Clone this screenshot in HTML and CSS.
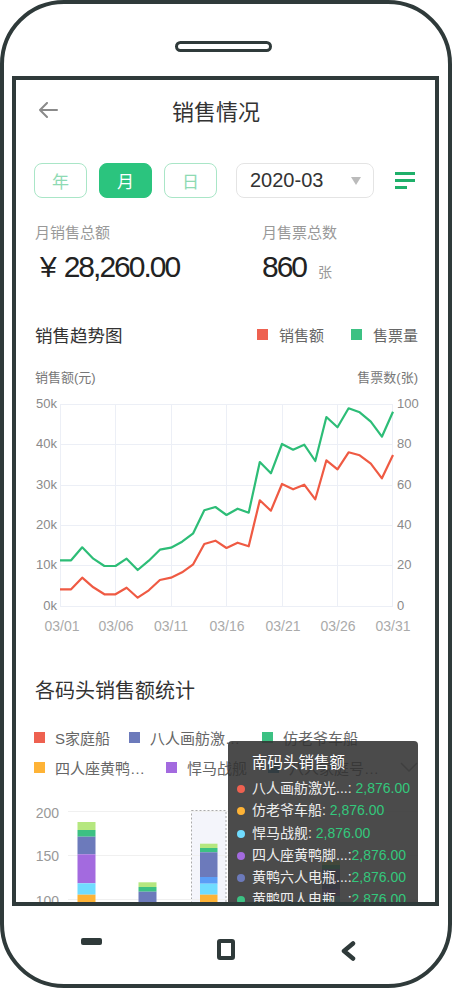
FILE: index.html
```html
<!DOCTYPE html>
<html lang="zh-CN">
<head>
  <meta charset="UTF-8">
  <meta name="viewport" content="width=device-width, initial-scale=1.0">
  <title>销售情况</title>
  <link rel="stylesheet" href="styles.css">
</head>
<body>
<div class="phone">
  <div class="speaker"></div>
  <div class="screen">
    <div class="header">
      <svg class="back" width="20" height="16" viewBox="0 0 20 16">
        <path d="M19 8H2M9 1L2 8l7 7" fill="none" stroke="#8a8a8a" stroke-width="2" stroke-linecap="round" stroke-linejoin="round"/>
      </svg>
      <h1 class="title">销售情况</h1>
    </div>

    <div class="controls">
      <button class="tab">年</button>
      <button class="tab active">月</button>
      <button class="tab">日</button>
      <div class="select"><span>2020-03</span><i class="caret"></i></div>
      <div class="menu"><span></span><span></span><span class="short"></span></div>
    </div>

    <div class="stats">
      <div class="stat first">
        <div class="stat-label">月销售总额</div>
        <div class="stat-value"><span class="yen">¥</span>28,260.00</div>
      </div>
      <div class="stat">
        <div class="stat-label">月售票总数</div>
        <div class="stat-value">860<small>张</small></div>
      </div>
    </div>

    <div class="section-head">
      <h2>销售趋势图</h2>
      <div class="legend">
        <span class="sq red"></span>销售额
        <span class="sq green gap"></span>售票量
      </div>
    </div>
    <div class="axis-titles"><span>销售额(元)</span><span>售票数(张)</span></div>

    <svg class="trend" width="419" height="253" viewBox="16 387 419 253">
      <g class="grid">
        <line x1="60" y1="404.5" x2="393" y2="404.5"/>
        <line x1="60" y1="444.5" x2="393" y2="444.5"/>
        <line x1="60" y1="485.5" x2="393" y2="485.5"/>
        <line x1="60" y1="525.5" x2="393" y2="525.5"/>
        <line x1="60" y1="565.5" x2="393" y2="565.5"/>
        <line x1="60" y1="606.5" x2="393" y2="606.5"/>
        <line x1="60.5" y1="404" x2="60.5" y2="607"/>
        <line x1="115.5" y1="404" x2="115.5" y2="607"/>
        <line x1="171.5" y1="404" x2="171.5" y2="607"/>
        <line x1="226.5" y1="404" x2="226.5" y2="607"/>
        <line x1="282.5" y1="404" x2="282.5" y2="607"/>
        <line x1="337.5" y1="404" x2="337.5" y2="607"/>
        <line x1="392.5" y1="404" x2="392.5" y2="607"/>
      </g>
      <g class="ylabels left">
        <text x="57" y="405">50k</text>
        <text x="57" y="445">40k</text>
        <text x="57" y="486">30k</text>
        <text x="57" y="526">20k</text>
        <text x="57" y="566">10k</text>
        <text x="57" y="607">0k</text>
      </g>
      <g class="ylabels right">
        <text x="397" y="405">100</text>
        <text x="397" y="445">80</text>
        <text x="397" y="486">60</text>
        <text x="397" y="526">40</text>
        <text x="397" y="566">20</text>
        <text x="397" y="607">0</text>
      </g>
      <g class="xlabels">
        <text x="62" y="627">03/01</text>
        <text x="116" y="627">03/06</text>
        <text x="171" y="627">03/11</text>
        <text x="227" y="627">03/16</text>
        <text x="283" y="627">03/21</text>
        <text x="338" y="627">03/26</text>
        <text x="393" y="627">03/31</text>
      </g>
      <polyline class="line-green" points="60,560.3 71.1,560.3 82.2,547.3 93.3,558.7 104.4,566 115.5,566 126.6,558.7 137.7,570 148.8,560.7 159.9,549.7 171,547.7 182.1,541.7 193.2,533.3 204.3,510.3 215.4,507 226.5,515 237.6,508.7 248.7,512.7 259.8,462 270.9,473.3 282,444 293.1,449.7 304.2,444.7 315.3,461 326.4,417 337.5,427.3 348.6,408.3 359.7,412.3 370.8,421.7 381.9,436.7 393,411.7"/>
      <polyline class="line-red" points="60,589.3 71.1,589.3 82.2,577.7 93.3,587.3 104.4,594.3 115.5,594.3 126.6,587.7 137.7,597.7 148.8,590.3 159.9,580 171,577.7 182.1,572.3 193.2,564.3 204.3,544 215.4,540.7 226.5,548 237.6,542.7 248.7,546.3 259.8,500.3 270.9,510.7 282,484 293.1,489.3 304.2,484.7 315.3,499.3 326.4,460.3 337.5,469.3 348.6,452.3 359.7,455.3 370.8,463.7 381.9,478.3 393,455"/>
    </svg>

    <h2 class="section-title">各码头销售额统计</h2>
    <div class="pier-legend row1">
      <div class="item"><span class="sq red"></span>S家庭船</div>
      <div class="item"><span class="sq slate"></span>八人画舫激…</div>
      <div class="item"><span class="sq green"></span>仿老爷车船</div>
    </div>
    <div class="pier-legend row2">
      <div class="item"><span class="sq orange"></span>四人座黄鸭…</div>
      <div class="item"><span class="sq purple"></span>悍马战舰</div>
      <div class="item"><span class="sq teal"></span>八人家庭号…</div>
      <svg class="pager" width="18" height="10" viewBox="0 0 18 10">
        <path d="M1 1l8 8 8-8" fill="none" stroke="#999" stroke-width="1.5"/>
      </svg>
    </div>

    <svg class="bars" width="419" height="123" viewBox="16 779 419 123">
      <rect class="hover" x="191.5" y="809.5" width="34.5" height="100"/>
      <g class="grid">
        <line x1="68" y1="810.5" x2="418" y2="810.5"/>
        <line x1="68" y1="854.5" x2="418" y2="854.5"/>
        <line x1="68" y1="898.5" x2="418" y2="898.5"/>
      </g>
      <g class="ylabels left">
        <text x="59" y="813">200</text>
        <text x="59" y="856">150</text>
        <text x="59" y="901">100</text>
      </g>
      <g>
        <rect class="c-lgreen" x="77.5" y="821" width="18" height="8"/>
        <rect class="c-green" x="77.5" y="829" width="18" height="6.7"/>
        <rect class="c-slate" x="77.5" y="835.7" width="18" height="17.6"/>
        <rect class="c-purple" x="77.5" y="853.3" width="18" height="29"/>
        <rect class="c-cyan" x="77.5" y="882.3" width="18" height="11.4"/>
        <rect class="c-orange" x="77.5" y="893.7" width="18" height="12"/>

        <rect class="c-lgreen" x="138.5" y="881.3" width="18" height="4.7"/>
        <rect class="c-green" x="138.5" y="886" width="18" height="4.7"/>
        <rect class="c-slate" x="138.5" y="890.7" width="18" height="11"/>
        <rect class="c-purple" x="138.5" y="901.7" width="18" height="4"/>

        <rect class="c-lgreen" x="200" y="842.7" width="17.5" height="4.3"/>
        <rect class="c-green" x="200" y="847" width="17.5" height="4.3"/>
        <rect class="c-slate" x="200" y="851.3" width="17.5" height="24.7"/>
        <rect class="c-blue" x="200" y="876" width="17.5" height="6.7"/>
        <rect class="c-cyan" x="200" y="882.7" width="17.5" height="11"/>
        <rect class="c-orange" x="200" y="893.7" width="17.5" height="12"/>

        <rect class="c-lgreen" x="322" y="860" width="18" height="4"/>
        <rect class="c-green" x="322" y="864" width="18" height="4"/>
        <rect class="c-slate" x="322" y="868" width="18" height="20"/>
        <rect class="c-purple" x="322" y="888" width="18" height="7"/>
        <rect class="c-cyan" x="322" y="895" width="18" height="10"/>
      </g>
    </svg>

    <div class="tooltip">
      <div class="tip-title">南码头销售额</div>
      <div class="tip-row"><i class="tip-dot red"></i>八人画舫激光...: <b>2,876.00</b></div>
      <div class="tip-row"><i class="tip-dot orange"></i>仿老爷车船: <b>2,876.00</b></div>
      <div class="tip-row"><i class="tip-dot cyan"></i>悍马战舰: <b>2,876.00</b></div>
      <div class="tip-row"><i class="tip-dot purple"></i>四人座黄鸭脚...:<b>2,876.00</b></div>
      <div class="tip-row"><i class="tip-dot slate"></i>黄鸭六人电瓶...:<b>2,876.00</b></div>
      <div class="tip-row"><i class="tip-dot green"></i>黄鸭四人电瓶...:<b>2,876.00</b></div>
    </div>
  </div>

  <div class="nav">
    <span class="nav-minus"></span>
    <span class="nav-home"></span>
    <svg class="nav-back" width="16" height="20" viewBox="0 0 16 20">
      <path d="M13 2.5L4 10l9 7.5" fill="none" stroke="#2f3a3a" stroke-width="4.5" stroke-linecap="round" stroke-linejoin="round"/>
    </svg>
  </div>
</div>
</body>
</html>
```

FILE: styles.css
```css
* {
  box-sizing: border-box;
}
body {
  margin: 0;
  background-color: #fff;
  font-family: "Liberation Sans", "Noto Sans CJK SC", sans-serif;
  color: #333;
}
.phone {
  width: 452px;
  height: 988px;
  border: 4px solid #2f3a3a;
  border-radius: 64px;
  overflow: hidden;
}
.speaker {
  width: 97px;
  height: 11px;
  margin: 37px 0 0 171px;
  border: 3px solid #2f3a3a;
  border-radius: 6px;
}
.screen {
  position: relative;
  width: 427px;
  height: 830px;
  margin: 24px 0 0 8px;
  border: 4px solid #2f3a3a;
  overflow: hidden;
  background-color: #fff;
}

/* header */
.header {
  display: flex;
  align-items: center;
  height: 60px;
  padding-left: 22px;
}
.title {
  margin: 0 0 0 114px;
  font-size: 22px;
  font-weight: normal;
  color: #333;
}

/* tabs + date */
.controls {
  display: flex;
  align-items: center;
  height: 35px;
  margin-top: 23px;
  padding-left: 18px;
}
.tab {
  width: 53px;
  height: 35px;
  margin-right: 12px;
  padding: 0;
  font-family: inherit;
  font-size: 17px;
  color: #8edab3;
  background-color: #fff;
  border: 1px solid #a9e6c7;
  border-radius: 8px;
}
.tab.active {
  color: #fff;
  background-color: #2bc47e;
  border-color: #2bc47e;
}
.select {
  display: flex;
  align-items: center;
  width: 138px;
  height: 35px;
  margin-left: 7px;
  padding: 0 12px 0 13px;
  font-size: 20px;
  color: #333;
  border: 1px solid #e4e4e4;
  border-radius: 8px;
}
.caret {
  margin-left: auto;
  border-left: 5px solid transparent;
  border-right: 5px solid transparent;
  border-top: 8px solid #bbb;
}
.menu {
  display: flex;
  flex-direction: column;
  gap: 4.5px;
  margin-left: 21px;
}
.menu span {
  display: block;
  width: 20px;
  height: 2.5px;
  background-color: #1fb06a;
}
.menu span.short {
  width: 12px;
}

/* totals */
.stats {
  display: flex;
  margin-top: 24px;
  padding-left: 19px;
}
.stat.first {
  width: 227px;
}
.stat-label {
  height: 22px;
  font-size: 15px;
  line-height: 22px;
  color: #999;
}
.stat-value {
  height: 36px;
  margin-top: 5px;
  font-size: 30px;
  line-height: 36px;
  letter-spacing: -2px;
  color: #222;
}
.yen {
  margin: 0 9px 0 5px;
}
.stat-value small {
  margin-left: 12px;
  font-size: 14px;
  line-height: 1;
  letter-spacing: 0;
  color: #999;
}

/* trend chart */
.section-head {
  display: flex;
  align-items: center;
  justify-content: space-between;
  height: 24px;
  margin-top: 37px;
  padding: 0 17px 0 19px;
}
.section-head h2 {
  margin: 0;
  font-size: 17.5px;
  font-weight: normal;
  color: #333;
}
.legend {
  display: flex;
  align-items: center;
  font-size: 15px;
  color: #666;
}
.sq {
  display: inline-block;
  width: 11px;
  height: 11px;
  margin-right: 10px;
}
.legend .sq {
  margin-right: 11px;
}
.legend .sq.gap {
  margin-left: 27px;
}
.red { background-color: #ee6150; }
.green { background-color: #3cc183; }
.slate { background-color: #6c7abb; }
.orange { background-color: #feb336; }
.purple { background-color: #a36adf; }
.teal { background-color: #3b8fb5; }
.cyan { background-color: #70dcff; }

.axis-titles {
  display: flex;
  justify-content: space-between;
  height: 18px;
  margin-top: 23px;
  padding: 0 17px 0 19px;
  font-size: 13px;
  line-height: 18px;
  color: #777;
}
.trend,
.bars {
  display: block;
}
.bars {
  margin-top: 2px;
}
.grid line {
  stroke: #eceff6;
  stroke-width: 1;
}
.ylabels text {
  font-size: 13px;
  fill: #8a8a8a;
  dominant-baseline: middle;
}
.ylabels.left text {
  text-anchor: end;
}
.xlabels text {
  font-size: 14px;
  fill: #aaa;
  text-anchor: middle;
  dominant-baseline: middle;
}
.line-green,
.line-red {
  fill: none;
  stroke-width: 2.2;
  stroke-linejoin: round;
}
.line-green { stroke: #2dbd77; }
.line-red { stroke: #ef5a43; }

/* pier chart */
.section-title {
  height: 26px;
  margin: 38px 0 0 19px;
  font-size: 20px;
  font-weight: normal;
  line-height: 26px;
  color: #333;
}
.pier-legend {
  display: grid;
  align-items: center;
  height: 22px;
  padding-left: 18px;
  font-size: 15px;
  color: #666;
}
.pier-legend.row1 {
  margin-top: 22px;
  grid-template-columns: 95px 133px auto;
}
.pier-legend.row2 {
  margin-top: 8px;
  grid-template-columns: 132px 102px 113px auto;
}
.pier-legend .item {
  display: flex;
  align-items: center;
  white-space: nowrap;
}
.pager {
  margin-left: 19px;
}
.bars .grid line {
  stroke: #f0f0f0;
}
.bars .ylabels text {
  font-size: 14px;
  fill: #999;
}
.hover {
  fill: #f4f5fb;
  stroke: #aaa;
  stroke-width: 1;
  stroke-dasharray: 2 2;
}
.c-lgreen { fill: #b5e77f; }
.c-green { fill: #3cc183; }
.c-slate { fill: #6c7abb; }
.c-purple { fill: #a36adf; }
.c-cyan { fill: #70dcff; }
.c-blue { fill: #5b9df6; }
.c-orange { fill: #feb336; }

/* tooltip over the bars */
.tooltip {
  position: absolute;
  top: 661px;
  left: 212px;
  width: 190px;
  height: 200px;
  padding: 11px 9px;
  background-color: rgba(50, 50, 50, 0.88);
  border-radius: 4px;
}
.tip-title {
  padding-left: 15px;
  margin-bottom: 3px;
  font-size: 15.5px;
  line-height: 22px;
  color: #fff;
}
.tip-row {
  height: 22.3px;
  font-size: 14px;
  line-height: 22.3px;
  color: #eee;
  white-space: nowrap;
}
.tip-row b {
  font-weight: normal;
  color: #33c87c;
}
.tip-dot {
  display: inline-block;
  width: 8px;
  height: 8px;
  margin-right: 7px;
  border-radius: 50%;
  vertical-align: 0;
}

/* bottom buttons */
.nav {
  display: flex;
  align-items: flex-start;
  padding-left: 77px;
}
.nav-minus {
  width: 21px;
  height: 7px;
  margin-top: 32px;
  background-color: #2f3a3a;
  border-radius: 2px;
}
.nav-home {
  width: 18px;
  height: 21px;
  margin: 33px 0 0 115px;
  border: 4px solid #2f3a3a;
  border-radius: 3px;
}
.nav-back {
  margin: 35px 0 0 105px;
}
```
